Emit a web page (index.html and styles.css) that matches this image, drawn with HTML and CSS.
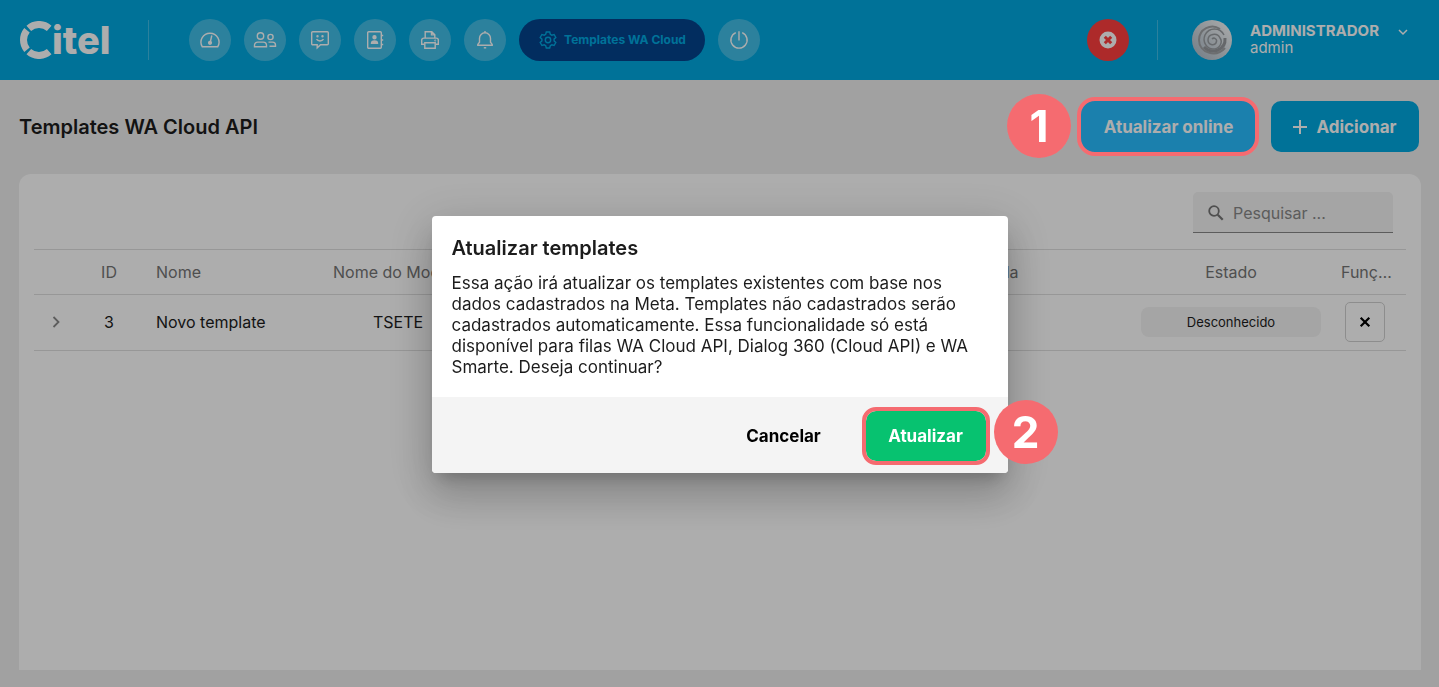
FILE: index.html
```html
<!DOCTYPE html>
<html lang="pt-BR">
<head>
	<meta charset="UTF-8">
	<meta name="viewport" content="width=device-width, initial-scale=1.0">
	<link rel="stylesheet" href="styles.css">
	<title>Templates WA Cloud API</title>
</head>
<body>
	<header>
		<a class="logo" href="#" aria-label="Citel">
			<svg width="32" height="38" viewBox="0 0 32 38" fill="none" stroke="currentColor" stroke-width="7">
				<path d="M8.8 7.3A15.5 15.5 0 0 1 29.2 7.3"/>
				<path d="M7 9.2A15.5 15.5 0 0 0 7 28.800"/>
				<path d="M8.8 30.7A15.5 15.5 0 0 0 29.2 30.700"/>
			</svg>
			<span>itel</span>
		</a>
		<div class="divider"></div>
		<nav>
			<a class="nav-item" href="#" aria-label="Painel">
				<svg width="22" height="20" viewBox="0 0 22 20">
					<path d="M3.2 16.7a9 9 0 1 1 15.6 0z"/>
					<path d="M12.8 5.5l-1.4 6"/>
					<circle cx="11" cy="12.8" r="1.4" fill="currentColor"/>
				</svg>
			</a>
			<a class="nav-item" href="#" aria-label="Usuários">
				<svg width="24" height="20" viewBox="0 0 24 20">
					<circle cx="7.5" cy="6" r="3.2"/>
					<path d="M1.5 16.7v-1.4a3.2 3.2 0 0 1 3.2-3.2h5.6a3.2 3.2 0 0 1 3.2 3.2v1.4z"/>
					<circle cx="17.5" cy="7" r="2.6"/>
					<path d="M15.5 12.1h4a3 3 0 0 1 3 3v1.2h-6"/>
				</svg>
			</a>
			<a class="nav-item" href="#" aria-label="Mensagens">
				<svg width="20" height="20" viewBox="0 0 20 20">
					<path d="M2.7 1.7h14.6a1 1 0 0 1 1 1v11.1a1 1 0 0 1-1 1h-6.8l-3.3 3v-3H2.7a1 1 0 0 1-1-1V2.7a1 1 0 0 1 1-1z"/>
					<path d="M6.5 9.2c1.5 2.4 5.5 2.4 7 0"/>
					<circle cx="7.5" cy="6.3" r=".5" fill="currentColor"/>
					<circle cx="12.5" cy="6.3" r=".5" fill="currentColor"/>
				</svg>
			</a>
			<a class="nav-item" href="#" aria-label="Contatos">
				<svg width="20" height="20" viewBox="0 0 20 20">
					<rect x="2.7" y="1.7" width="13.6" height="16.6" rx="1"/>
					<path d="M16.8 5.5h1.4M16.8 10h1.4M16.8 14.5h1.4"/>
					<circle cx="9.5" cy="7.3" r="1.5" fill="currentColor"/>
					<path d="M6.5 13.2c0-3 6-3 6 0z" fill="currentColor"/>
				</svg>
			</a>
			<a class="nav-item" href="#" aria-label="Impressão">
				<svg width="20" height="20" viewBox="0 0 20 20">
					<path d="M5.2 8V1.7h6.6l3 3V8M11.5 1.7v3.2h3.3"/>
					<path d="M4.2 14.3H1.7v-4.2a2 2 0 0 1 2-2h12.6a2 2 0 0 1 2 2v4.2h-2.5"/>
					<path d="M4.8 12.8h10.4v5.4H4.8z"/>
					<circle cx="15.2" cy="10.5" r=".3" fill="currentColor"/>
				</svg>
			</a>
			<a class="nav-item" href="#" aria-label="Notificações">
				<svg width="20" height="20" viewBox="0 0 20 20">
					<path d="M10 1v1.800M2.8 15.2h14.4v-.8l-1.7-2.2V8.3a5.5 5.5 0 0 0-11 0v3.9l-1.7 2.2z"/>
					<path d="M8.8 17.8h2.4"/>
				</svg>
			</a>
			<a class="nav-item active" href="#">
				<svg width="20" height="20" viewBox="0 0 20 20">
					<path d="M8.3 2h3.4l.6 2.3 1.5.9 2.3-.7 1.7 3-1.7 1.6v1.8l1.7 1.6-1.7 3-2.3-.7-1.5.9-.6 2.3H8.3l-.6-2.3-1.5-.9-2.3.7-1.7-3 1.7-1.6V9.1L2.2 7.5l1.7-3 2.3.7 1.5-.9z"/>
					<circle cx="10" cy="10" r="2.7"/>
				</svg>
				Templates WA Cloud
			</a>
			<a class="nav-item" href="#" aria-label="Sair">
				<svg width="20" height="20" viewBox="0 0 20 20">
					<path d="M10 1.2v9.3M6.8 2.6a8.1 8.1 0 1 0 6.4 0"/>
				</svg>
			</a>
		</nav>
		<button class="status-btn" aria-label="Desconectado">
			<svg width="18" height="18" viewBox="0 0 18 18">
				<circle cx="9" cy="9" r="8.5" fill="#fff"/>
				<path d="M5.8 5.8l6.4 6.4M12.2 5.8l-6.4 6.4" stroke="#ff3e3e" stroke-width="3"/>
			</svg>
		</button>
		<div class="divider user-divider"></div>
		<svg class="avatar" width="40" height="40" viewBox="0 0 40 40" fill="none">
			<defs>
				<linearGradient id="avatar-bg" x1="0" y1="1" x2="1" y2="0">
					<stop offset="0" stop-color="#a9b8c6"/>
					<stop offset=".5" stop-color="#d2dae0"/>
					<stop offset="1" stop-color="#fff"/>
				</linearGradient>
			</defs>
			<circle cx="20" cy="20" r="20" fill="url(#avatar-bg)"/>
			<path d="M28 9C19 3 7 9 7 20c0 13 17 18 26 8" stroke="#a0a2a5" stroke-width="2"/>
			<path d="M33 18c1 12-13 17-21 9" stroke="#96999c" stroke-width="3"/>
			<path d="M32 15C28 7 17 7 13 15c-3 7 2 14 8 14 7 0 10-7 7-11-3-6-12-4-12 2 0 5 6 6 8 3 2-4-2-6-4-4" stroke="#999da1" stroke-width="1.5"/>
		</svg>
		<button class="user-menu">
			<span class="user-names"><strong>ADMINISTRADOR</strong><span>admin</span></span>
			<svg width="12" height="12" viewBox="0 0 12 12" fill="none" stroke="currentColor" stroke-width="1.5"><path d="M2 4l4 4 4-4"/></svg>
		</button>
	</header>

	<main>
		<div class="page-head">
			<h1>Templates WA Cloud API</h1>
			<button class="btn btn-online">Atualizar online</button>
			<button class="btn btn-add">
				<svg width="14" height="14" viewBox="0 0 14 14" stroke="currentColor" stroke-width="2"><path d="M7 0v14M0 7h14"/></svg>
				Adicionar
			</button>
		</div>
		<section class="card">
			<label class="search">
				<svg width="18" height="18" viewBox="0 0 18 18" fill="none" stroke="currentColor"><circle cx="7" cy="7" r="4.8" stroke-width="1.8"/><path d="M10.7 10.7l5 5" stroke-width="2.2"/></svg>
				<input type="text" placeholder="Pesquisar ..." aria-label="Pesquisar">
			</label>
			<table>
				<colgroup>
					<col class="col-expand">
					<col class="col-id">
					<col class="col-name">
					<col class="col-model">
					<col>
					<col class="col-queue">
					<col class="col-state">
					<col class="col-actions">
				</colgroup>
				<thead>
					<tr>
						<th></th>
						<th>ID</th>
						<th class="left">Nome</th>
						<th>Nome do Modelo</th>
						<th></th>
						<th>Fila</th>
						<th>Estado</th>
						<th class="actions">Funções</th>
					</tr>
				</thead>
				<tbody>
					<tr>
						<td>
							<button class="expand" aria-label="Expandir">
								<svg width="12" height="12" viewBox="0 0 12 12" fill="none" stroke="currentColor" stroke-width="1.8"><path d="M3.5 1l5 5-5 5"/></svg>
							</button>
						</td>
						<td>3</td>
						<td class="left">Novo template</td>
						<td>TSETE</td>
						<td></td>
						<td></td>
						<td class="state"><span class="tag">Desconhecido</span></td>
						<td class="actions">
							<button class="remove" aria-label="Remover">
								<svg width="12" height="12" viewBox="0 0 12 12" stroke="currentColor" stroke-width="2.2"><path d="M1.7 1.7l8.6 8.6M10.3 1.7l-8.6 8.6"/></svg>
							</button>
						</td>
					</tr>
				</tbody>
			</table>
		</section>
	</main>

	<div class="backdrop">
		<div class="ring"></div>
		<div class="step step-1">1</div>
		<div class="dialog" role="dialog" aria-modal="true" aria-labelledby="dialog-title">
			<div class="dialog-body">
				<h2 id="dialog-title">Atualizar templates</h2>
				<p>Essa ação irá atualizar os templates existentes com base nos dados cadastrados na Meta. Templates não cadastrados serão cadastrados automaticamente. Essa funcionalidade só está disponível para filas WA Cloud API, Dialog 360 (Cloud API) e WA Smarte. Deseja continuar?</p>
			</div>
			<div class="dialog-actions">
				<button class="btn btn-cancel">Cancelar</button>
				<button class="btn btn-confirm">Atualizar</button>
			</div>
			<div class="step step-2">2</div>
		</div>
	</div>
</body>
</html>
```
FILE: styles.css
```css
* {
	box-sizing: border-box;
}

:root {
	--blue: #00a9e1;
	--light-blue: #29bdff;
	--navy: #04438d;
	--red: #ff3e3e;
	--green: #07c270;
	--mark: #f56b70;
	--bg: #eee;
	--soft: #f3f3f3;
	--line: #dfdfdf;
	--muted: #757575;
}

body {
	margin: 0;
	min-height: 100vh;
	display: flex;
	flex-direction: column;
	background: var(--bg);
	color: #1c1c1c;
	font: 16px/20px Inter, "Liberation Sans", sans-serif;
}

h1, h2, p {
	margin: 0;
}

button {
	padding: 0;
	border: none;
	background: none;
	font: inherit;
	color: inherit;
	cursor: pointer;
}

svg {
	display: block;
	flex-shrink: 0;
}

header {
	display: flex;
	align-items: center;
	height: 80px;
	padding: 0 30px 0 20px;
	background: var(--blue);
	color: #fff;
}

.logo {
	display: flex;
	align-items: center;
	width: 88px;
	color: inherit;
	text-decoration: none;
	font-size: 38px;
	font-weight: 800;
	line-height: 40px;
}

.divider {
	width: 1px;
	height: 40px;
	margin: 0 40px;
	background: rgba(255, 255, 255, 0.25);
}

nav {
	display: flex;
	gap: 13px;
	margin-right: auto;
}

.nav-item {
	display: flex;
	align-items: center;
	justify-content: center;
	gap: 6px;
	width: 42px;
	height: 42px;
	border-radius: 21px;
	background: rgba(255, 255, 255, 0.26);
	color: #fff;
	font-size: 12px;
	font-weight: 700;
	text-decoration: none;
	white-space: nowrap;
}
.nav-item svg {
	fill: none;
	stroke: currentColor;
	stroke-width: 1.4;
}
.nav-item.active {
	width: 186px;
	background: var(--navy);
	color: var(--blue);
}

.status-btn {
	display: grid;
	place-items: center;
	width: 42px;
	height: 42px;
	border-radius: 50%;
	background: var(--red);
}

.user-divider {
	margin: 0 34px 0 28px;
}

.avatar {
	margin-right: 18px;
}

.user-menu {
	display: flex;
	gap: 18px;
	padding-bottom: 2px;
	text-align: left;
}
.user-names {
	display: grid;
	font-size: 15px;
	line-height: 17px;
}
.user-menu svg {
	margin-top: 4px;
}

main {
	flex: 1;
	display: flex;
	flex-direction: column;
	gap: 22px;
	padding: 21px 18px 17px 19px;
}

.page-head {
	display: flex;
	align-items: center;
	gap: 15px;
	padding-right: 2px;
}

h1 {
	margin-right: auto;
	font-size: 20px;
	font-weight: 600;
	line-height: 24px;
}

.btn {
	display: flex;
	align-items: center;
	justify-content: center;
	gap: 9px;
	height: 51px;
	border-radius: 10px;
	color: #fff;
	font-size: 17px;
	font-weight: 700;
	white-space: nowrap;
}
.btn-online {
	width: 175px;
	background: var(--light-blue);
}
.btn-add {
	width: 148px;
	background: var(--blue);
}

.card {
	flex: 1;
	display: flex;
	flex-direction: column;
	padding: 18px 15px;
	border-radius: 12px 12px 0 0;
	background: #fff;
}

.search {
	align-self: flex-end;
	display: flex;
	align-items: center;
	gap: 8px;
	width: 200px;
	height: 41px;
	margin: 0 13px 16px 0;
	padding: 1px 14px 0;
	border-bottom: 1px solid #888;
	border-radius: 5px 5px 0 0;
	background: var(--soft);
	color: var(--muted);
}
.search input {
	width: 100%;
	min-width: 0;
	padding: 0;
	border: none;
	outline: none;
	background: none;
	font: inherit;
}
.search input::placeholder {
	color: #888;
}

table {
	width: 100%;
	table-layout: fixed;
	border-collapse: collapse;
	text-align: center;
}
.col-expand { width: 44px; }
.col-id { width: 62px; }
.col-name { width: 168px; }
.col-model { width: 180px; }
.col-queue { width: 251px; }
.col-state { width: 200px; }
.col-actions { width: 75px; }

th {
	height: 45px;
	padding: 0;
	color: var(--muted);
	font-weight: 400;
	white-space: nowrap;
}
td {
	height: 56px;
	padding: 0 0 2px;
}
tr {
	border-bottom: 1px solid var(--line);
}
thead tr {
	border-top: 1px solid var(--line);
}
.left {
	padding-left: 16px;
	text-align: left;
}
.state {
	padding: 0 10px 2px;
}
th.actions {
	padding: 0 11px 0 10px;
	overflow: hidden;
	text-overflow: ellipsis;
}
td.actions {
	padding: 0 18px 2px 10px;
}

.expand {
	display: block;
	margin: 0 auto;
	color: #8a8a8a;
}

.tag {
	display: block;
	border-radius: 8px;
	background: var(--soft);
	font-size: 13px;
	line-height: 30px;
}

.remove {
	display: grid;
	place-items: center;
	width: 40px;
	height: 40px;
	margin: 0 auto;
	border: 1px solid #d0d0d0;
	border-radius: 5px;
	color: #000;
}

.backdrop {
	position: fixed;
	inset: 0;
	display: flex;
	align-items: center;
	justify-content: center;
	padding-top: 2px;
	background: rgba(0, 0, 0, 0.32);
}

.dialog {
	position: relative;
	width: 576px;
	max-width: 90%;
	border-radius: 4px;
	background: #fff;
	box-shadow: 0 11px 15px -7px rgba(0, 0, 0, 0.2), 0 24px 38px 3px rgba(0, 0, 0, 0.14), 0 9px 46px 8px rgba(0, 0, 0, 0.12);
}
.dialog-body {
	padding: 20px 20px 19px;
	font-size: 17px;
	line-height: 21px;
}
.dialog h2 {
	margin-bottom: 13px;
	font-size: 20px;
	font-weight: 600;
	line-height: 24px;
}
.dialog-actions {
	display: flex;
	align-items: center;
	justify-content: flex-end;
	gap: 22px;
	height: 76px;
	padding: 2px 22px 0;
	border-radius: 0 0 4px 4px;
	background: #f4f4f4;
}
.dialog-actions .btn {
	width: 120px;
	height: 50px;
}
.btn-cancel {
	color: #000;
}
.btn-confirm {
	background: var(--green);
	outline: 4px solid var(--mark);
}

/* numbered steps of the walkthrough */
.ring {
	position: absolute;
	top: 97px;
	right: 180px;
	width: 182px;
	height: 59px;
	border: 4px solid var(--mark);
	border-radius: 18px;
}
.step {
	position: absolute;
	width: 64px;
	height: 64px;
	border-radius: 50%;
	background: var(--mark);
	color: #fff;
	font-size: 44px;
	font-weight: 700;
	line-height: 64px;
	text-align: center;
}
.step-1 {
	top: 94px;
	right: 368px;
}
.step-2 {
	right: -50px;
	bottom: 9px;
}
```
